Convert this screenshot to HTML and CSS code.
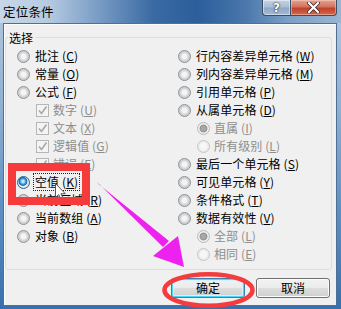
FILE: index.html
```html
<!DOCTYPE html>
<html lang="zh-CN">
<head>
<meta charset="utf-8">
<title>定位条件</title>
<link rel="stylesheet" href="styles.css">
</head>
<body>
<div class="window">
  <div class="titlebar">
    <span class="title">定位条件</span>
    <div class="caption-btns">
      <span class="cb help">?</span>
      <span class="cb close">
        <svg width="13" height="11" viewBox="0 0 13 11"><path d="M2 1 L11 10 M11 1 L2 10" stroke="#3a2020" stroke-width="3.6" stroke-linecap="round"/><path d="M2 1 L11 10 M11 1 L2 10" stroke="#fff" stroke-width="2.2" stroke-linecap="round"/></svg>
      </span>
    </div>
  </div>
  <div class="client">
    <fieldset class="group">
      <legend class="legend">选择</legend>
      <div class="cols">
        <div class="col">
          <div class="row"><span class="radio"></span><span class="lbl">批注 (<u>C</u>)</span></div>
          <div class="row"><span class="radio"></span><span class="lbl">常量 (<u>O</u>)</span></div>
          <div class="row"><span class="radio"></span><span class="lbl">公式 (<u>F</u>)</span></div>
          <div class="row sub dis"><span class="check"><svg width="11" height="11" viewBox="0 0 11 11"><path d="M2 5.5 L4.5 8.5 L9.5 1.5" fill="none" stroke="#a8a8a8" stroke-width="1.6"/></svg></span><span class="lbl">数字 (<u>U</u>)</span></div>
          <div class="row sub dis"><span class="check"><svg width="11" height="11" viewBox="0 0 11 11"><path d="M2 5.5 L4.5 8.5 L9.5 1.5" fill="none" stroke="#a8a8a8" stroke-width="1.6"/></svg></span><span class="lbl">文本 (<u>X</u>)</span></div>
          <div class="row sub dis"><span class="check"><svg width="11" height="11" viewBox="0 0 11 11"><path d="M2 5.5 L4.5 8.5 L9.5 1.5" fill="none" stroke="#a8a8a8" stroke-width="1.6"/></svg></span><span class="lbl">逻辑值 (<u>G</u>)</span></div>
          <div class="row sub dis"><span class="check"><svg width="11" height="11" viewBox="0 0 11 11"><path d="M2 5.5 L4.5 8.5 L9.5 1.5" fill="none" stroke="#a8a8a8" stroke-width="1.6"/></svg></span><span class="lbl">错误 (<u>E</u>)</span></div>
          <div class="row"><span class="radio on"></span><span class="lbl focus">空值 (<u>K</u>)</span></div>
          <div class="row"><span class="radio"></span><span class="lbl">当前区域 (<u>R</u>)</span></div>
          <div class="row"><span class="radio"></span><span class="lbl">当前数组 (<u>A</u>)</span></div>
          <div class="row"><span class="radio"></span><span class="lbl">对象 (<u>B</u>)</span></div>
        </div>
        <div class="col">
          <div class="row"><span class="radio"></span><span class="lbl">行内容差异单元格 (<u>W</u>)</span></div>
          <div class="row"><span class="radio"></span><span class="lbl">列内容差异单元格 (<u>M</u>)</span></div>
          <div class="row"><span class="radio"></span><span class="lbl">引用单元格 (<u>P</u>)</span></div>
          <div class="row"><span class="radio"></span><span class="lbl">从属单元格 (<u>D</u>)</span></div>
          <div class="row sub dis"><span class="radio dis-on"></span><span class="lbl">直属 (<u>I</u>)</span></div>
          <div class="row sub dis"><span class="radio dis-off"></span><span class="lbl">所有级别 (<u>L</u>)</span></div>
          <div class="row"><span class="radio"></span><span class="lbl">最后一个单元格 (<u>S</u>)</span></div>
          <div class="row"><span class="radio"></span><span class="lbl">可见单元格 (<u>Y</u>)</span></div>
          <div class="row"><span class="radio"></span><span class="lbl">条件格式 (<u>T</u>)</span></div>
          <div class="row"><span class="radio"></span><span class="lbl">数据有效性 (<u>V</u>)</span></div>
          <div class="row sub dis"><span class="radio dis-on"></span><span class="lbl">全部 (<u>L</u>)</span></div>
          <div class="row sub dis"><span class="radio dis-off"></span><span class="lbl">相同 (<u>E</u>)</span></div>
        </div>
      </div>
    </fieldset>
    <div class="buttons">
      <button class="btn default">确定</button>
      <button class="btn">取消</button>
    </div>
  </div>
  <svg class="annot" width="341" height="309" viewBox="0 0 341 309">
    <g transform="translate(55.5,183.5)">
      <path d="M0 0 L0 14 L3.2 11 L5.8 16.5 L8 15.5 L5.4 10.2 L9.8 10.2 Z" fill="#fff" stroke="#555" stroke-width="1"/>
    </g>
    <rect x="12" y="167" width="74" height="34" fill="none" stroke="#f53b3b" stroke-width="8"/>
    <polygon points="97,182 99,184.5 169,241 163,247" fill="#ee22ee"/>
    <polygon points="184,267 153,256 178,236" fill="#ee22ee"/>
    <ellipse cx="208.5" cy="290" rx="44" ry="15.8" fill="none" stroke="#f53b3b" stroke-width="4.5"/>
  </svg>
</div>
</body>
</html>
```
FILE: styles.css
```css
* { box-sizing: border-box; }
html, body { margin: 0; padding: 0; }
body {
  width: 341px;
  height: 309px;
  overflow: hidden;
  font-family: "Noto Sans CJK SC", "Noto Sans", sans-serif;
  font-size: 12px;
  color: #000;
}
.window {
  position: relative;
  width: 341px;
  height: 309px;
  display: flex;
  flex-direction: column;
  background: linear-gradient(180deg, #b4c8de 0%, #8fb0d2 35%, #5b8dc2 70%, #3670ad 100%);
}
.titlebar {
  height: 23px;
  flex: none;
  display: flex;
  align-items: flex-start;
  background: linear-gradient(90deg, #c7d7e8 0%, #b6cbe1 14%, #7c9fc7 28%, #3a6aa3 45%, #2c5e9b 58%, #4a77ac 72%, #7a9ec6 84%, #9ab5d2 100%);
}
.title {
  padding: 3px 0 0 3px;
  font-size: 12.5px;
  line-height: 17px;
  letter-spacing: 0.2px;
  color: #000;
}
.caption-btns {
  margin-left: auto;
  margin-right: 4px;
  display: flex;
}
.cb {
  height: 16px;
  display: flex;
  align-items: center;
  justify-content: center;
  border: 1px solid #3c4d63;
  border-top: none;
  font-family: "DejaVu Sans", sans-serif;
  font-weight: bold;
  color: #fff;
  text-shadow: 0 0 2px #223, 0 0 1px #223;
}
.help {
  width: 28px;
  border-right: none;
  border-bottom-left-radius: 4px;
  font-size: 12px;
  line-height: 14px;
  background: linear-gradient(180deg, #c5d4e4 0%, #a9bdd4 48%, #8ea8c6 52%, #a3bad4 100%);
  box-shadow: inset 0 0 0 1px rgba(255,255,255,0.45);
}
.close {
  width: 47px;
  border-bottom-right-radius: 4px;
  background: linear-gradient(180deg, #e3a491 0%, #d3735c 45%, #c1402c 55%, #d06a4e 100%);
  box-shadow: inset 0 0 0 1px rgba(255,220,210,0.45);
}
.client {
  flex: 1;
  margin: 0 4px 3px 3px;
  border: 1px solid #4f6f94;
  background: #f0f0f0;
  box-shadow: inset 1px 1px 0 #fcfcfc;
  display: flex;
  flex-direction: column;
}
.group {
  margin: 6px 4px 0 1px;
  padding: 0 0 6px 11px;
  border: 1px solid #d5dfe5;
  border-radius: 3px;
  min-width: 0;
}
.legend {
  margin-left: -9px;
  padding: 0 3px 0 1px;
  font-size: 12px;
  line-height: 15px;
}
.cols {
  margin-top: 2px;
  display: grid;
  grid-template-columns: 161px 1fr;
}
.col {
  display: flex;
  flex-direction: column;
}
.row {
  height: 18px;
  display: flex;
  align-items: center;
  gap: 5px;
  white-space: nowrap;
  line-height: 18px;
}
.row.sub { padding-left: 19px; gap: 4px; }
.row.dis { color: #8e8e8e; }
.lbl { letter-spacing: 0.1px; }
.lbl u { text-decoration-thickness: 1px; text-underline-offset: 1px; }
.radio {
  width: 13px;
  height: 13px;
  flex: none;
  border-radius: 50%;
  border: 1px solid #8d9196;
  background: radial-gradient(circle at 50% 50%, #f4f4f4 0 2.5px, #dcdcdc 3.5px, #c9cbcd 5px, #eaeaea 6px);
}
.radio.on {
  border-color: #2c628b;
  background: radial-gradient(circle at 45% 40%, #b9ecff 0 1px, #4eb0ec 2.5px, #1a5fa8 4px, #e6eef5 4.8px, #dfe6ec 6px);
}
.radio.dis-on {
  border-color: #b8b8b8;
  background: radial-gradient(circle at 50% 50%, #a6a6a6 0 2.5px, #8f8f8f 3.5px, #ececec 4.3px, #f2f2f2 6px);
}
.radio.dis-off {
  border-color: #c6c6c6;
  background: radial-gradient(circle at 50% 50%, #f7f7f7 0 3px, #e9e9e9 5px, #f2f2f2 6px);
}
.check {
  width: 13px;
  height: 13px;
  flex: none;
  border: 1px solid #b6b6b6;
  background: #f4f4f4;
  display: flex;
  align-items: center;
  justify-content: center;
}
.check svg { display: block; }
.focus {
  display: inline-block;
  line-height: 14px;
  outline: 1px dotted #222;
  outline-offset: 1px;
}
.buttons {
  margin-top: auto;
  display: flex;
  justify-content: flex-end;
  gap: 11px;
  padding: 0 6px 7px 0;
}
.btn {
  width: 74px;
  height: 20px;
  padding: 0;
  font-family: "Noto Sans CJK SC", "Noto Sans", sans-serif;
  font-size: 12px;
  line-height: 16px;
  color: #000;
  border: 1px solid #707070;
  border-radius: 3px;
  background: linear-gradient(180deg, #f2f2f2 0%, #ebebeb 48%, #dddddd 52%, #cfcfcf 100%);
  box-shadow: inset 0 0 0 1px #fcfcfc;
}
.btn.default {
  border-color: #3c7fb1;
  box-shadow: inset 0 0 0 1px #48d8fb, inset 0 0 0 2px #d6f3fd;
  background: linear-gradient(180deg, #f2f2f2 0%, #ebebeb 48%, #dddddd 52%, #cfcfcf 100%);
}
.annot {
  position: absolute;
  left: 0;
  top: 0;
  pointer-events: none;
}
```
